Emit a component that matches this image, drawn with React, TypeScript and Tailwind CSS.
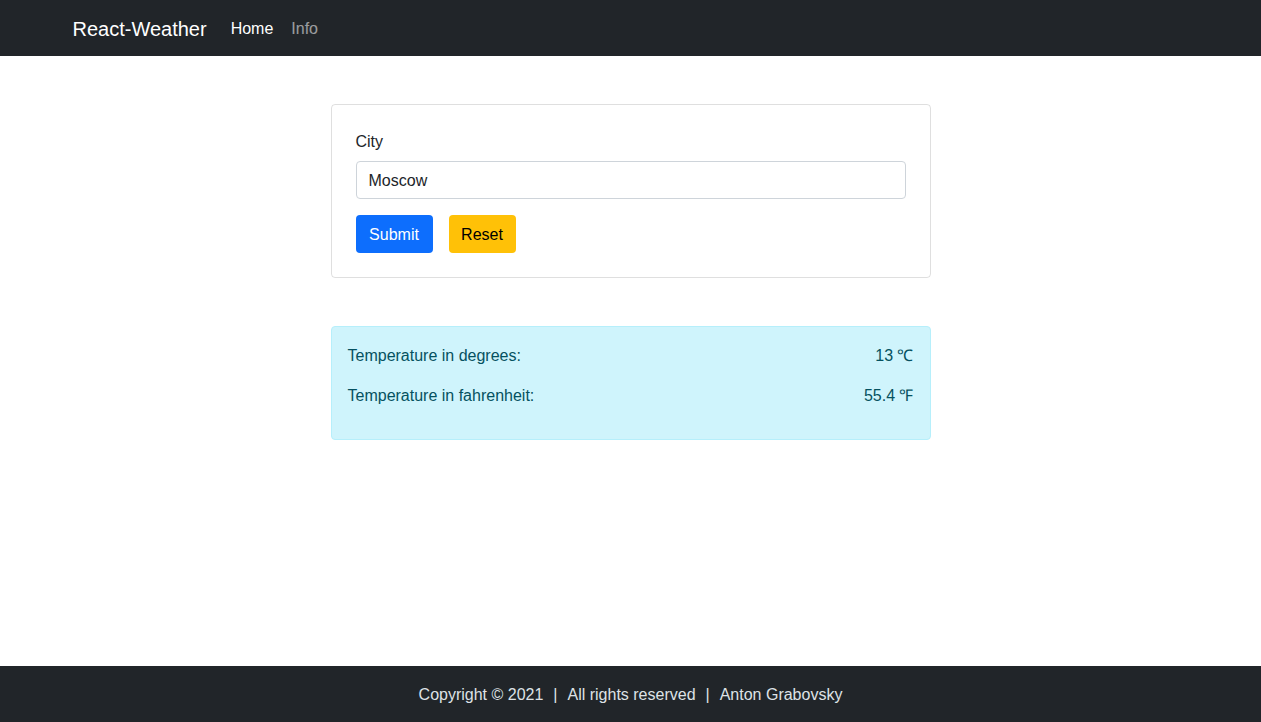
import React, { useState } from "react";

const font = { fontFamily: '"Liberation Sans", Arial, sans-serif' };

const Navbar: React.FC = () => (
	<nav className="h-14 bg-[#212529]">
		<div className="mx-auto flex h-full max-w-[1140px] items-center px-3 pt-px">
			<span className="mr-4 text-xl text-white">React-Weather</span>
			<a className="px-2 text-base text-white" href="#">
				Home
			</a>
			<a className="ml-0.5 px-2 text-base text-white/55" href="#">
				Info
			</a>
		</div>
	</nav>
);

const Footer: React.FC = () => (
	<footer className="flex h-14 items-center justify-center bg-[#212529] pt-px text-base text-[#dee2e6]">
		<span>Copyright © 2021</span>
		<span className="mx-2.5">|</span>
		<span>All rights reserved</span>
		<span className="mx-2.5">|</span>
		<span>Anton Grabovsky</span>
	</footer>
);

const App: React.FC = () => {
	const [city, setCity] = useState("Moscow");

	return (
		<div className="flex min-h-screen flex-col bg-white text-[#212529]" style={font}>
			<Navbar />
			<main className="flex-1">
				<div className="mx-auto mt-12 w-[600px]">
					<div className="rounded border border-black/[0.125] p-6">
						<label className="mb-2 block pt-px text-base leading-[23px]">City</label>
						<input
							className="block h-[38px] w-full rounded border border-[#ced4da] px-3 pt-px text-base outline-none"
							value={city}
							onChange={(e) => setCity(e.target.value)}
						/>
						<div className="mt-4 flex gap-4">
							<button className="h-[38px] w-[77px] rounded bg-[#0d6efd] pt-px text-base text-white">
								Submit
							</button>
							<button
								className="h-[38px] w-[67px] rounded bg-[#ffc107] pt-px text-base text-black"
								onClick={() => setCity("")}
							>
								Reset
							</button>
						</div>
					</div>
					<div className="mt-12 rounded border border-[#b6effb] bg-[#cff4fc] p-4 text-base leading-6 text-[#055160]">
						<p className="mb-4 flex justify-between pt-px leading-[23px]">
							<span>Temperature in degrees:</span>
							<span>13 ℃</span>
						</p>
						<p className="mb-4 flex justify-between pt-px leading-[23px]">
							<span>Temperature in fahrenheit:</span>
							<span>55.4 ℉</span>
						</p>
					</div>
				</div>
			</main>
			<Footer />
		</div>
	);
};

export default App;
